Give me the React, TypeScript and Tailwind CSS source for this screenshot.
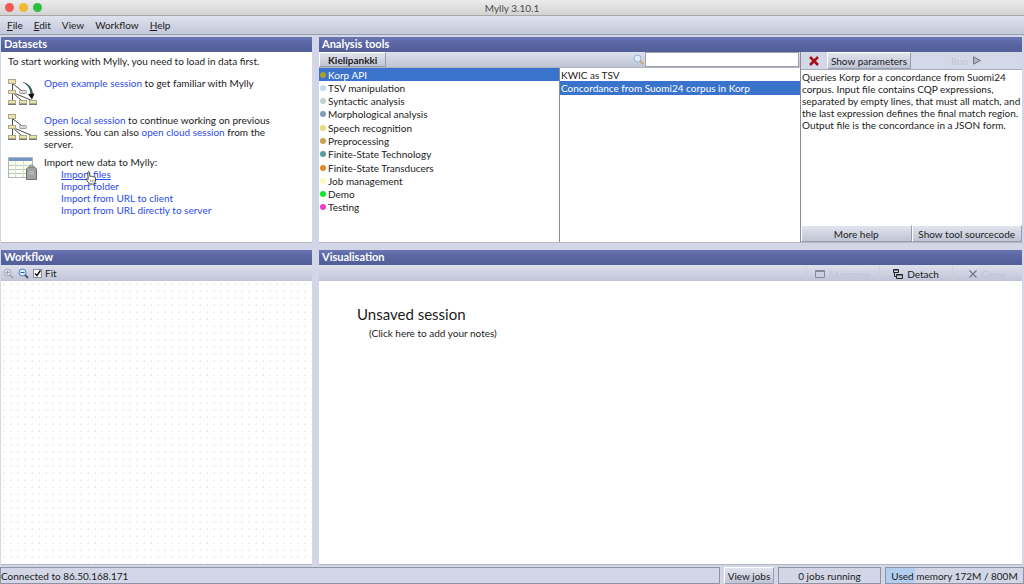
import React, { useState } from 'react';

const categories = [
  { name: 'Korp API', color: '#a3a02c' },
  { name: 'TSV manipulation', color: '#c3d9ec' },
  { name: 'Syntactic analysis', color: '#c3cdd4' },
  { name: 'Morphological analysis', color: '#829dbd' },
  { name: 'Speech recognition', color: '#e6dc78' },
  { name: 'Preprocessing', color: '#cca04c' },
  { name: 'Finite-State Technology', color: '#5c9c98' },
  { name: 'Finite-State Transducers', color: '#e58a1f' },
  { name: 'Job management', color: '#fdf8bd' },
  { name: 'Demo', color: '#14e62c' },
  { name: 'Testing', color: '#f03cc8' },
];

const tools = ['KWIC as TSV', 'Concordance from Suomi24 corpus in Korp'];

const menus = [
  { key: 'F', rest: 'ile' },
  { key: 'E', rest: 'dit' },
  { key: '', rest: 'View' },
  { key: '', rest: 'Workflow' },
  { key: 'H', rest: 'elp' },
];

const PanelTitle = ({ children }: { children: React.ReactNode }) => (
  <h2 className="h-[15px] shrink-0 pl-[3px] text-[11px] leading-[14px] font-bold text-white bg-linear-to-b from-[#6a75b2] via-[#5865a0] to-[#525e98]">
    {children}
  </h2>
);

const Link = ({ children, underline }: { children: React.ReactNode; underline?: boolean }) => (
  <a href="#" className={underline ? 'text-[#2b4bea] underline' : 'text-[#2b4bea] hover:underline'}>
    {children}
  </a>
);

const TreeIcon = ({ arrow }: { arrow?: boolean }) => (
  <svg width="30" height="27" viewBox="0 0 30 27" className="shrink-0" aria-hidden="true">
    <path d="M4.500 4v18M5 5l9 7M5 14l9 8M6 14l19 8" fill="none" stroke="#4a4a46" strokeWidth="1" />
    <g fill="#e9e5a6" stroke="#aaa891" strokeWidth="1">
      <rect x="0.5" y="0.5" width="7" height="4" />
      <rect x="0.5" y="11.5" width="7" height="3" />
      <rect x="0.5" y="21.5" width="7" height="3" />
      <rect x="11.5" y="21.5" width="7" height="3" />
      <rect x="21.5" y="21.5" width="7" height="3" />
    </g>
    <path d="M0 25.500h8M11 25.500h8M21 25.500h8" stroke="#77776f" />
    <rect x="11.5" y="11.5" width="7" height="3" rx="1" fill="#d8d8d8" stroke="#999" />
    {arrow && (
      <>
        <path d="M14 3c5.500 0 11 5.500 11 13h-2.500c0-6-3-11-8.500-13z" fill="#2e5d4c" />
        <path d="M20 15l4 5.500 2.500-6z" fill="#111" />
      </>
    )}
  </svg>
);

const TableIcon = () => (
  <svg width="30" height="26" viewBox="0 0 30 26" className="shrink-0" aria-hidden="true">
    <rect x="0.5" y="1.5" width="24" height="20" fill="#fdfdf0" stroke="#a9b6c4" />
    <rect x="1" y="2" width="23" height="3" fill="#7594c4" />
    <path d="M1 9.500h23M1 13.500h23M1 17.500h23" stroke="#b8cbd0" />
    <path d="M7.500 5v16M15.500 5v16" stroke="#dcdfc4" />
    <path d="M21.500 13v-2.500c0-2 4-2 4 0V13" fill="#ddd" stroke="#777" />
    <path d="M18.500 13l2-2h6l2 2v10.500h-10z" fill="#a2a2a2" stroke="#6f6f6f" />
    <path d="M21 16h5M21 18h5" stroke="#c4c4c4" />
  </svg>
);

const Magnifier = ({ sign, faded }: { sign?: string; faded?: boolean }) => (
  <svg width="11" height="11" viewBox="0 0 11 11" className={faded ? 'opacity-40' : ''} aria-hidden="true">
    <circle cx="4.5" cy="4.5" r="3.5" fill="#dcecfa" stroke={faded ? '#777' : sign ? '#4d7fc0' : '#8fb4d8'} />
    <path d="M7 7l3 3" stroke={faded ? '#777' : sign ? '#556' : '#c9a868'} strokeWidth="2" />
    {sign && <path d={sign} stroke={faded ? '#555' : '#2c5a9c'} />}
  </svg>
);

const HandCursor = () => (
  <svg
    width="12"
    height="14"
    viewBox="0 0 12 15"
    className="absolute left-6 top-[3px] pointer-events-none"
    aria-hidden="true"
  >
    <path
      d="M3 8L2.500 2c0-1.500 1.600-1.500 1.800 0L5 6c.5-1 1.700-.8 2 .2.600-.8 1.600-.5 1.900.3.900-.5 1.900 0 1.900 1.200v3L9.500 14h-5L1 9.500C.4 8.300 1.500 7.600 3 9z"
      fill="#fff"
      stroke="#222"
      strokeWidth="0.900"
    />
    <path d="M5.500 9v3M7.300 9v3M9 9v3" stroke="#777" strokeWidth="0.700" />
  </svg>
);

const raised =
  'border border-t-white border-l-white border-b-[#989eb0] border-r-[#989eb0] bg-linear-to-b from-[#e2e4ee] to-[#bfc4d4]';

const App = () => {
  const [category, setCategory] = useState('Korp API');
  const [tool, setTool] = useState(tools[1]);
  const [fit, setFit] = useState(true);
  const [search, setSearch] = useState('');

  return (
    <div className="min-h-screen flex flex-col bg-[#d2d6e6] text-[#1c1c1c] font-[Lato,sans-serif] text-[10px] leading-[12px]">
      <header className="relative h-4 shrink-0 bg-linear-to-b from-[#ececec] to-[#d3d3d3] border-b border-[#a8a8a8] flex items-center">
        <div className="flex gap-[5px] pl-[5px]">
          <span className="size-[9px] rounded-full bg-[#f25a55]" />
          <span className="size-[9px] rounded-full bg-[#f3b732]" />
          <span className="size-[9px] rounded-full bg-[#2bbf3d]" />
        </div>
        <h1 className="absolute inset-x-0 text-center text-[#4c4c4c]">Mylly 3.10.1</h1>
      </header>

      <nav className="h-[19px] shrink-0 flex items-center gap-[11px] pl-[7px] bg-linear-to-b from-[#dfe2ee] to-[#c3c8d9] border-b border-[#9a9fae]">
        {menus.map((menu) => (
          <button key={menu.rest}>
            {menu.key && <u>{menu.key}</u>}
            {menu.rest}
          </button>
        ))}
      </nav>

      <main className="flex-1 grid grid-cols-[311px_1fr] grid-rows-[206px_1fr] gap-[7px] pt-[2px] pl-px pr-[2px]">
        <section className="flex flex-col bg-white border-b border-[#b4b7c2]">
          <PanelTitle>Datasets</PanelTitle>
          <div className="pl-[7px] pt-[3px]">
            <p>To start working with Mylly, you need to load in data first.</p>
            <div className="flex gap-[6px] mt-3">
              <TreeIcon arrow />
              <p className="-mt-[2px]">
                <Link>Open example session</Link> to get familiar with Mylly
              </p>
            </div>
            <div className="flex gap-[6px] mt-2">
              <TreeIcon />
              <p>
                <Link>Open local session</Link> to continue working on previous
                <br />
                sessions. You can also <Link>open cloud session</Link> from the
                <br />
                server.
              </p>
            </div>
            <div className="flex gap-[6px] mt-[6px]">
              <TableIcon />
              <div>
                <p>Import new data to Mylly:</p>
                <ul className="pl-[17px]">
                  <li className="relative">
                    <Link underline>Import files</Link>
                    <HandCursor />
                  </li>
                  <li><Link>Import folder</Link></li>
                  <li><Link>Import from URL to client</Link></li>
                  <li><Link>Import from URL directly to server</Link></li>
                </ul>
              </div>
            </div>
          </div>
        </section>

        <section className="flex flex-col bg-white border-b border-[#b4b7c2]">
          <PanelTitle>Analysis tools</PanelTitle>
          <div className="flex-1 grid grid-cols-[482px_1fr]">
            <div className="flex flex-col border-r border-[#8a8d98]">
              <div className="h-4 flex bg-linear-to-b from-[#dde0ec] to-[#bfc5d7] border-b border-[#b0b3bd]">
                <button className={`px-2 font-bold ${raised}`}>Kielipankki</button>
                <label htmlFor="search" className="ml-auto mr-px flex items-center">
                  <Magnifier />
                </label>
                <input
                  id="search"
                  aria-label="Search tools"
                  value={search}
                  onChange={(e) => setSearch(e.target.value)}
                  className="w-[154px] mr-px px-1 bg-white border border-[#9da1ad] outline-none"
                />
              </div>
              <div className="flex-1 grid grid-cols-[240px_1fr]">
                <ul className="h-[146px] grid grid-rows-11">
                  {categories.map((item) => (
                    <li key={item.name} className="flex">
                      <button
                        onClick={() => setCategory(item.name)}
                        className={`flex-1 flex items-center gap-[2px] pl-px text-left ${
                          category === item.name ? 'bg-[#3a73cb] text-white' : ''
                        }`}
                      >
                        <span className="size-[6px] rounded-full" style={{ backgroundColor: item.color }} />
                        {item.name}
                      </button>
                    </li>
                  ))}
                </ul>
                <div className="border-l border-[#8a8d98]">
                  <ul className="h-[146px] grid grid-rows-11">
                    {tools.map((name) => (
                      <li key={name} className="flex">
                        <button
                          onClick={() => setTool(name)}
                          className={`flex-1 pl-px text-left ${tool === name ? 'bg-[#3a73cb] text-white' : ''}`}
                        >
                          {name}
                        </button>
                      </li>
                    ))}
                  </ul>
                </div>
              </div>
            </div>

            <div className="flex flex-col">
              <div className="h-[18px] flex bg-[#d3d8e9] border-b border-[#a9adba]">
                <button aria-label="Close parameters" className="w-[26px] flex items-center justify-center">
                  <svg width="10" height="10" viewBox="0 0 10 10" aria-hidden="true">
                    <path d="M1 1l8 8M9 1L1 9" stroke="#a80c14" strokeWidth="2.500" />
                  </svg>
                </button>
                <button className={`w-[84px] ${raised}`}>Show parameters</button>
                <button disabled className="flex-1 flex items-center justify-center gap-1 text-[#bfc3d1]">
                  Run
                  <svg width="10" height="9" viewBox="0 0 10 9" aria-hidden="true">
                    <path d="M1.500 .8l7 3.700-7 3.700z" fill="#b0b3bd" stroke="#71747c" />
                  </svg>
                </button>
              </div>
              <p className="pl-px pt-px whitespace-nowrap">
                Queries Korp for a concordance from Suomi24
                <br />
                corpus. Input file contains CQP expressions,
                <br />
                separated by empty lines, that must all match, and
                <br />
                the last expression defines the final match region.
                <br />
                Output file is the concordance in a JSON form.
              </p>
              <div className="mt-auto h-[17px] grid grid-cols-2 bg-[#d3d8e9] whitespace-nowrap">
                <button className={raised}>More help</button>
                <button className={raised}>Show tool sourcecode</button>
              </div>
            </div>
          </div>
        </section>

        <section className="flex flex-col bg-white border-b border-[#b4b7c2]">
          <PanelTitle>Workflow</PanelTitle>
          <div className="h-4 shrink-0 flex items-center gap-1 pl-[2px] bg-linear-to-b from-[#dde0ec] to-[#bfc5d7]">
            <button disabled aria-label="Zoom in">
              <Magnifier sign="M2.500 4.500h4M4.500 2.500v4" faded />
            </button>
            <button aria-label="Zoom out">
              <Magnifier sign="M2.500 4.500h4" />
            </button>
            <label className="flex items-center gap-[3px]">
              <input
                type="checkbox"
                checked={fit}
                onChange={() => setFit(!fit)}
                className="sr-only"
              />
              <span className="size-[9px] bg-white border border-[#8a8d98]">
                {fit && (
                  <svg width="7" height="7" viewBox="0 0 7 7" aria-hidden="true">
                    <path d="M1 3.500l2 2 3.500-5" fill="none" stroke="#111" strokeWidth="1.500" />
                  </svg>
                )}
              </span>
              Fit
            </label>
          </div>
          <div className="flex-1 bg-[radial-gradient(circle,#ececec_1px,transparent_1px)] bg-size-[7px_7px]" />
        </section>

        <section className="flex flex-col bg-white border-b border-[#b4b7c2]">
          <PanelTitle>Visualisation</PanelTitle>
          <div className="h-4 shrink-0 flex justify-end pt-px bg-linear-to-b from-[#dde0ec] to-[#bfc5d7]">
            <button disabled className="w-[73px] flex items-center justify-center gap-1 border-l border-[#ccd0de] text-[#bfc4d3]">
              <svg width="10" height="8" viewBox="0 0 10 8" aria-hidden="true">
                <path d="M.5.500h9v7h-9zM.5 1.500h9" fill="none" stroke="#85899a" />
              </svg>
              Maximise
            </button>
            <button className="w-[73px] flex items-center justify-center gap-1 border-l border-[#ccd0de]">
              <svg width="10" height="10" viewBox="0 0 10 10" aria-hidden="true">
                <path d="M.5.500h5v3h-5zM.5 1h5M3.500 5.500h6v4h-6zM3.500 6h6M1.500 4v3.500h2" fill="none" stroke="#222" />
              </svg>
              Detach
            </button>
            <button disabled className="w-[70px] flex items-center justify-center gap-1 border-l border-[#ccd0de] text-[#bfc4d3]">
              <svg width="8" height="8" viewBox="0 0 8 8" aria-hidden="true">
                <path d="M.5.500l7 7M7.500.500l-7 7" stroke="#74788a" strokeWidth="1.300" />
              </svg>
              Close
            </button>
          </div>
          <div className="pl-[38px] pt-6">
            <h3 className="text-[15px] leading-[18px]">Unsaved session</h3>
            <button className="ml-3 mt-1">(Click here to add your notes)</button>
          </div>
        </section>
      </main>

      <footer className="h-[17px] shrink-0 mt-[2px] flex gap-1 whitespace-nowrap">
        <div className="flex-1 flex items-center border border-[#8f94a5]">Connected to 86.50.168.171</div>
        <button className={`w-[50px] ${raised}`}>View jobs</button>
        <div className="w-[103px] flex items-center justify-center border border-[#8f94a5]">0 jobs running</div>
        <div className="w-[139px] flex items-center justify-center border border-[#8f94a5] bg-linear-to-r from-[#b3cdf0] from-21% to-[#d2d6e6] to-21%">
          Used memory 172M / 800M
        </div>
      </footer>
    </div>
  );
};

export default App;
